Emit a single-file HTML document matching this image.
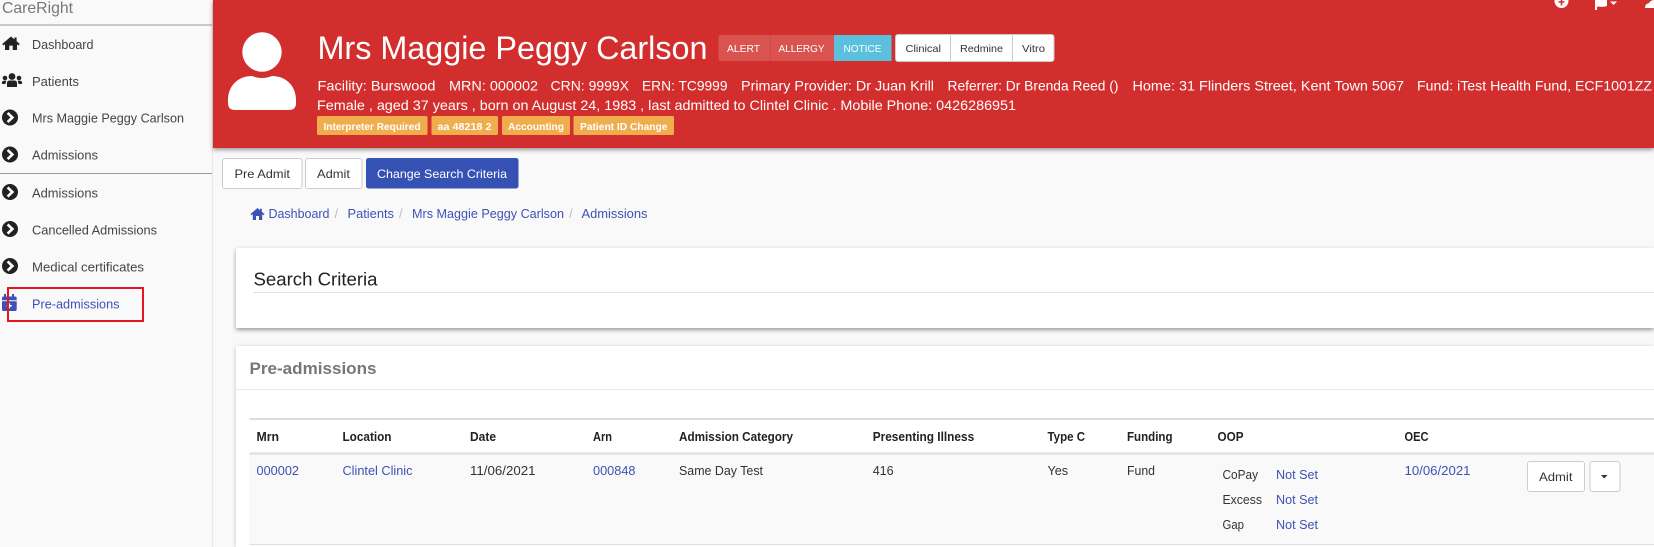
<!DOCTYPE html>
<html><head><meta charset="utf-8"><style>
html,body{margin:0;padding:0;width:1654px;height:547px;overflow:hidden;background:#f9f9f9}
svg{display:block;overflow:hidden}
text{font-family:"Liberation Sans",Arial,sans-serif;font-size:13px;fill:#333}
.side{font-size:13px;fill:#444}
.w{fill:#fff}
.info{font-size:14px;fill:#fff}
.lab{font-size:10.5px;font-weight:bold;fill:#fff}
.bd{font-size:10.5px;fill:#fff}
.b{font-size:12px;fill:#333}
.l{fill:#3f51b5}
.h{font-weight:bold;font-size:12.5px;fill:#222}
</style></head><body>
<svg width="1654" height="547" viewBox="0 0 1654 547" xmlns="http://www.w3.org/2000/svg">
<defs>
<filter id="s" x="-2%" y="-20%" width="104%" height="150%"><feDropShadow dx="0" dy="2" stdDeviation="2.2" flood-color="#000" flood-opacity=".38"/></filter>
<filter id="s2" x="-2%" y="-20%" width="104%" height="120%"><feDropShadow dx="0" dy="1" stdDeviation="2" flood-color="#000" flood-opacity=".22"/></filter>
<g id="chev"><circle cx="0" cy="0" r="8" fill="#222"/><path d="M-2.4-4.6 L2.4 0 L-2.4 4.6" fill="none" stroke="#fff" stroke-width="2.6"/></g>
</defs>
<rect width="1654" height="547" fill="#f9f9f9"/>
<!-- sidebar -->
<rect x="212" y="0" width="1" height="547" fill="#e9e9e9"/>
<text x="2" y="13" style="font-size:16px;fill:#777" textLength="71" lengthAdjust="spacingAndGlyphs">CareRight</text>
<rect x="0" y="24.5" width="212" height="1" fill="#999"/>
<rect x="0" y="173" width="212" height="1" fill="#999"/>
<path d="M11 36.5 L2.2 44 L3.6 45.5 L5 44.3 V50 H9.3 V45.6 H12.7 V50 H17 V44.3 L18.4 45.5 L19.8 44 L16.6 41.3 V37.5 H14.4 V39.4 Z" fill="#222"/>
<g fill="#222"><circle cx="12" cy="76.5" r="3.4"/><circle cx="5" cy="78" r="2.3"/><circle cx="19" cy="78" r="2.3"/><path d="M7 87 V83 Q7 80.5 10 80.5 H14 Q17 80.5 17 83 V87 Z"/><path d="M2 84 V82.5 Q2 80.7 4 80.7 H6.4 Q5.5 82 5.6 84 Z M22 84 V82.5 Q22 80.7 20 80.7 H17.6 Q18.5 82 18.4 84 Z"/></g>
<text class="side" x="32" y="49" textLength="61.5" lengthAdjust="spacingAndGlyphs">Dashboard</text>
<text class="side" x="32" y="86" textLength="47" lengthAdjust="spacingAndGlyphs">Patients</text>
<text class="side" x="32" y="122.5" textLength="152" lengthAdjust="spacingAndGlyphs">Mrs Maggie Peggy Carlson</text>
<text class="side" x="32" y="159.5" textLength="66" lengthAdjust="spacingAndGlyphs">Admissions</text>
<text class="side" x="32" y="197.5" textLength="66" lengthAdjust="spacingAndGlyphs">Admissions</text>
<text class="side" x="32" y="234.5" textLength="125" lengthAdjust="spacingAndGlyphs">Cancelled Admissions</text>
<text class="side" x="32" y="271.5" textLength="112" lengthAdjust="spacingAndGlyphs">Medical certificates</text>
<text class="side l" style="fill:#3f51b5" x="32" y="308.5" textLength="87.5" lengthAdjust="spacingAndGlyphs">Pre-admissions</text>
<use href="#chev" x="10" y="117.5"/><use href="#chev" x="10" y="154.5"/><use href="#chev" x="10" y="192"/><use href="#chev" x="10" y="229"/><use href="#chev" x="10" y="266"/>
<path d="M4 294 H6 V296.5 H12 V294 H14 V296.5 H15 Q16.7 296.5 16.7 298.2 V300.2 H2 V298.2 Q2 296.5 3.5 296.5 H4 Z M2 301.2 H16.7 V309.2 Q16.7 311 15 311 H3.7 Q2 311 2 309.2 Z" fill="#3f51b5"/><path d="M6.8 305.8 H11.8 M9.3 303.3 V308.3" stroke="#fff" stroke-width="1.5"/>
<rect x="8" y="288" width="135" height="33" fill="none" stroke="#e8141f" stroke-width="2"/>
<!-- header -->
<rect x="213" y="0" width="1441" height="148" fill="#d32f2f" filter="url(#s)"/>
<circle cx="262" cy="52" r="19.7" fill="#fff"/>
<path d="M228 103 V100 C228 86 238 76 252 76 Q262 80 272 76 C286 76 296 86 296 100 V103 Q296 110 289 110 H235 Q228 110 228 103 Z" fill="#fff"/>
<text class="w" style="font-size:32px" x="317.5" y="59" textLength="390" lengthAdjust="spacingAndGlyphs">Mrs Maggie Peggy Carlson</text>
<rect x="718.5" y="35" width="115.5" height="26" rx="2" fill="#d9534f"/>
<rect x="770" y="35" width="1" height="26" fill="#d0484a"/>
<rect x="834" y="35" width="57.5" height="26" fill="#5bc0de"/>
<text class="bd" x="727" y="52" textLength="33" lengthAdjust="spacingAndGlyphs">ALERT</text>
<text class="bd" x="778.5" y="52" textLength="46" lengthAdjust="spacingAndGlyphs">ALLERGY</text>
<text class="bd" x="843.5" y="52" textLength="38" lengthAdjust="spacingAndGlyphs">NOTICE</text>
<rect x="895.5" y="34.5" width="158.5" height="27" rx="2.5" fill="#fff" stroke="#ccc"/>
<rect x="950" y="35" width="1" height="26" fill="#ccc"/><rect x="1012" y="35" width="1" height="26" fill="#ccc"/>
<text class="b" style="font-size:10.5px" x="905.5" y="52" textLength="35.5" lengthAdjust="spacingAndGlyphs">Clinical</text>
<text class="b" style="font-size:10.5px" x="960" y="52" textLength="43" lengthAdjust="spacingAndGlyphs">Redmine</text>
<text class="b" style="font-size:10.5px" x="1022" y="52" textLength="23" lengthAdjust="spacingAndGlyphs">Vitro</text>
<text class="info" x="317.5" y="90.5" textLength="118" lengthAdjust="spacingAndGlyphs">Facility: Burswood</text>
<text class="info" x="449" y="90.5" textLength="89" lengthAdjust="spacingAndGlyphs">MRN: 000002</text>
<text class="info" x="550.5" y="90.5" textLength="78.5" lengthAdjust="spacingAndGlyphs">CRN: 9999X</text>
<text class="info" x="642" y="90.5" textLength="85.5" lengthAdjust="spacingAndGlyphs">ERN: TC9999</text>
<text class="info" x="741" y="90.5" textLength="193" lengthAdjust="spacingAndGlyphs">Primary Provider: Dr Juan Krill</text>
<text class="info" x="947.5" y="90.5" textLength="171" lengthAdjust="spacingAndGlyphs">Referrer: Dr Brenda Reed ()</text>
<text class="info" x="1132.5" y="90.5" textLength="271.5" lengthAdjust="spacingAndGlyphs">Home: 31 Flinders Street, Kent Town 5067</text>
<text class="info" x="1417" y="90.5" textLength="235" lengthAdjust="spacingAndGlyphs">Fund: iTest Health Fund, ECF1001ZZ</text>
<text class="info" x="317" y="110" textLength="699" lengthAdjust="spacingAndGlyphs">Female , aged 37 years , born on August 24, 1983 , last admitted to Clintel Clinic . Mobile Phone: 0426286951</text>
<g fill="#f0ad4e"><rect x="317" y="116" width="110.5" height="19" rx="1.5"/><rect x="431.5" y="116" width="66.5" height="19" rx="1.5"/><rect x="502" y="116" width="68" height="19" rx="1.5"/><rect x="573.5" y="116" width="100.5" height="19" rx="1.5"/></g>
<text class="lab" x="323.5" y="130" textLength="97" lengthAdjust="spacingAndGlyphs">Interpreter Required</text>
<text class="lab" x="437.5" y="130" textLength="54" lengthAdjust="spacingAndGlyphs">aa 48218 2</text>
<text class="lab" x="508" y="130" textLength="56" lengthAdjust="spacingAndGlyphs">Accounting</text>
<text class="lab" x="580" y="130" textLength="87.5" lengthAdjust="spacingAndGlyphs">Patient ID Change</text>
<!-- top icons -->
<circle cx="1561.5" cy="1" r="7" fill="#fff"/><path d="M1561.5 -1 V5.5 M1558.5 2 H1564.5" stroke="#d32f2f" stroke-width="1.6"/>
<path d="M1595 0 H1607 V6 Q1603 7.5 1599 6.5 L1597 7 V10 H1595 Z" fill="#fff"/><path d="M1610 1.5 H1617 L1613.5 5 Z" fill="#fff"/>
<path d="M1645 8 Q1645 4 1649 3 Q1651 0 1654 0 V8 Z" fill="#fff"/>
<!-- buttons -->
<rect x="222.5" y="158.5" width="79.5" height="30" rx="2.5" fill="#fff" stroke="#ccc"/>
<rect x="305.5" y="158.5" width="56.5" height="30" rx="2.5" fill="#fff" stroke="#ccc"/>
<rect x="366" y="158" width="152.5" height="30.5" rx="2.5" fill="#3651b4"/>
<text class="b" x="234.5" y="178" textLength="55.5" lengthAdjust="spacingAndGlyphs">Pre Admit</text>
<text class="b" x="317" y="178" textLength="33" lengthAdjust="spacingAndGlyphs">Admit</text>
<text class="b" style="fill:#fff" x="377" y="178" textLength="130" lengthAdjust="spacingAndGlyphs">Change Search Criteria</text>
<!-- breadcrumb -->
<path d="M257.5 208 L250.5 214 L251.6 215.2 L252.8 214.2 V220 H256 V216 H259 V220 H262.2 V214.2 L263.4 215.2 L264.5 214 L261.8 211.7 V208.8 H260 V210.2 Z" fill="#3f51b5"/>
<text class="l" x="268.5" y="218" textLength="61" lengthAdjust="spacingAndGlyphs">Dashboard</text>
<text style="fill:#bbb" x="334.5" y="218">/</text>
<text class="l" x="347.5" y="218" textLength="46.5" lengthAdjust="spacingAndGlyphs">Patients</text>
<text style="fill:#bbb" x="399" y="218">/</text>
<text class="l" x="412" y="218" textLength="152" lengthAdjust="spacingAndGlyphs">Mrs Maggie Peggy Carlson</text>
<text style="fill:#bbb" x="569" y="218">/</text>
<text class="l" x="581.5" y="218" textLength="66" lengthAdjust="spacingAndGlyphs">Admissions</text>
<!-- search panel -->
<rect x="236" y="248" width="1418" height="80" fill="#fff" filter="url(#s)"/>
<text style="font-size:18px;fill:#222" x="253.5" y="285.5" textLength="124" lengthAdjust="spacingAndGlyphs">Search Criteria</text>
<rect x="253" y="292" width="1401" height="1" fill="#e3e3e3"/>
<!-- table panel -->
<rect x="236" y="346" width="1418" height="201" fill="#fff" filter="url(#s2)"/>
<text style="font-size:17px;font-weight:bold;fill:#777" x="249.5" y="374" textLength="127" lengthAdjust="spacingAndGlyphs">Pre-admissions</text>
<rect x="236" y="389" width="1418" height="1" fill="#e8e8e8"/>
<rect x="249.5" y="418" width="1404.5" height="2" fill="#ddd"/>
<rect x="249.5" y="454" width="1404.5" height="90" fill="#f9f9f9"/>
<rect x="249.5" y="452.5" width="1404.5" height="2" fill="#ddd"/>
<rect x="249.5" y="544" width="1404.5" height="1" fill="#ddd"/>
<text class="h" x="256.5" y="441" textLength="22.5" lengthAdjust="spacingAndGlyphs">Mrn</text>
<text class="h" x="342.5" y="441" textLength="49" lengthAdjust="spacingAndGlyphs">Location</text>
<text class="h" x="470" y="441" textLength="26" lengthAdjust="spacingAndGlyphs">Date</text>
<text class="h" x="593" y="441" textLength="19" lengthAdjust="spacingAndGlyphs">Arn</text>
<text class="h" x="679" y="441" textLength="114" lengthAdjust="spacingAndGlyphs">Admission Category</text>
<text class="h" x="872.7" y="441" textLength="101.5" lengthAdjust="spacingAndGlyphs">Presenting Illness</text>
<text class="h" x="1047.5" y="441" textLength="37.5" lengthAdjust="spacingAndGlyphs">Type C</text>
<text class="h" x="1127" y="441" textLength="45.5" lengthAdjust="spacingAndGlyphs">Funding</text>
<text class="h" x="1217.5" y="441" textLength="26" lengthAdjust="spacingAndGlyphs">OOP</text>
<text class="h" x="1404.5" y="441" textLength="24" lengthAdjust="spacingAndGlyphs">OEC</text>
<text class="l" x="256.5" y="475" textLength="42.5" lengthAdjust="spacingAndGlyphs">000002</text>
<text class="l" x="342.5" y="475" textLength="70" lengthAdjust="spacingAndGlyphs">Clintel Clinic</text>
<text x="470" y="475" textLength="65.5" lengthAdjust="spacingAndGlyphs">11/06/2021</text>
<text class="l" x="593" y="475" textLength="42.5" lengthAdjust="spacingAndGlyphs">000848</text>
<text x="679" y="475" textLength="84" lengthAdjust="spacingAndGlyphs">Same Day Test</text>
<text x="872.7" y="475" textLength="21" lengthAdjust="spacingAndGlyphs">416</text>
<text x="1047.5" y="475" textLength="20.5" lengthAdjust="spacingAndGlyphs">Yes</text>
<text x="1127" y="475" textLength="28" lengthAdjust="spacingAndGlyphs">Fund</text>
<text x="1222.5" y="479" textLength="35.5" lengthAdjust="spacingAndGlyphs">CoPay</text>
<text x="1222.5" y="504" textLength="39.5" lengthAdjust="spacingAndGlyphs">Excess</text>
<text x="1222.5" y="529" textLength="21.5" lengthAdjust="spacingAndGlyphs">Gap</text>
<text class="l" x="1276" y="479" textLength="42" lengthAdjust="spacingAndGlyphs">Not Set</text>
<text class="l" x="1276" y="504" textLength="42" lengthAdjust="spacingAndGlyphs">Not Set</text>
<text class="l" x="1276" y="529" textLength="42" lengthAdjust="spacingAndGlyphs">Not Set</text>
<text class="l" x="1404.5" y="475" textLength="66" lengthAdjust="spacingAndGlyphs">10/06/2021</text>
<rect x="1527.5" y="461.5" width="57" height="30" rx="2.5" fill="#fff" stroke="#ccc"/>
<text class="b" x="1539" y="481" textLength="33.5" lengthAdjust="spacingAndGlyphs">Admit</text>
<rect x="1590" y="461.5" width="30" height="30" rx="2.5" fill="#fff" stroke="#ccc"/>
<path d="M1601 475 H1607.5 L1604.2 478.5 Z" fill="#333"/>
</svg>
</body></html>
